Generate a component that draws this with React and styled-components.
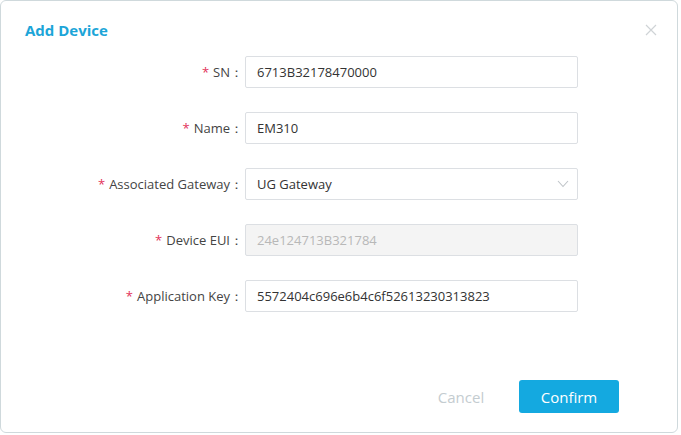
import styled, { createGlobalStyle } from "styled-components";

const GlobalStyle = createGlobalStyle`
    body {
        margin: 0;
        background: #ffffff;
        font-family: "Open Sans", "Noto Sans", sans-serif;
    }
`;

const Dialog = styled.div`
    width: 678px;
    height: 433px;
    box-sizing: border-box;
    border: 1px solid #cfd9dc;
    border-radius: 6px;
    background: #fff;
    display: flex;
    flex-direction: column;
`;
const Header = styled.div`
    display: flex;
    align-items: center;
    justify-content: space-between;
    padding: 19px 20px 0 24px;
    height: 20px;
`;
const Title = styled.div`
    font-size: 15px;
    font-weight: 700;
    color: #1ca5d8;
`;
const Close = styled.div`
    width: 12px;
    height: 12px;
    display: flex;
    cursor: pointer;
`;
const Form = styled.div`
    display: flex;
    flex-direction: column;
    gap: 24px;
    padding-top: 16px;
`;
const Row = styled.div`
    display: flex;
    align-items: center;
    height: 32px;
`;
const Label = styled.label`
    width: 242px;
    text-align: right;
    font-size: 13px;
    color: #444;
    white-space: nowrap;
`;
const Star = styled.span`
    color: #e2325a;
    margin-right: 4px;
`;
const Field = styled.div`
    margin-left: 2px;
    width: 333px;
    height: 32px;
    box-sizing: border-box;
    border: 1px solid #dcdfe3;
    border-radius: 2px;
    background: ${p => (p.disabled ? "#f4f4f4" : "#fff")};
    color: ${p => (p.disabled ? "#b8b8b8" : "#333")};
    font-size: 13px;
    display: flex;
    align-items: center;
    justify-content: space-between;
    padding: 0 8px 0 11px;
`;
const Footer = styled.div`
    margin-top: auto;
    display: flex;
    justify-content: flex-end;
    gap: 8px;
    padding: 0 58px 19px 0;
`;
const Button = styled.button`
    width: 100px;
    height: 33px;
    border: none;
    border-radius: 3px;
    font-family: inherit;
    font-size: 15px;
    cursor: pointer;
    background: ${p => (p.primary ? "#14a9e0" : "transparent")};
    color: ${p => (p.primary ? "#fff" : "#c4ccd0")};
`;

const fields = [
    { label: "SN", value: "6713B32178470000" },
    { label: "Name", value: "EM310" },
    { label: "Associated Gateway", value: "UG Gateway", select: true },
    { label: "Device EUI", value: "24e124713B321784", disabled: true },
    { label: "Application Key", value: "5572404c696e6b4c6f52613230313823" },
];

const App = () => {
    return (
        <>
            <GlobalStyle />
            <Dialog>
                <Header>
                    <Title>Add Device</Title>
                    <Close>
                        <svg width="12" height="12" viewBox="0 0 12 12">
                            <path d="M1 1L11 11M11 1L1 11" stroke="#cfd3d6" strokeWidth="1.2" fill="none" />
                        </svg>
                    </Close>
                </Header>
                <Form>
                    {fields.map(f => (
                        <Row key={f.label}>
                            <Label>
                                <Star>*</Star>
                                {f.label}：
                            </Label>
                            <Field disabled={f.disabled}>
                                <span>{f.value}</span>
                                {f.select && (
                                    <svg width="12" height="8" viewBox="0 0 12 8">
                                        <path d="M1 1L6 6.5L11 1" stroke="#bfc4c8" strokeWidth="1.1" fill="none" />
                                    </svg>
                                )}
                            </Field>
                        </Row>
                    ))}
                </Form>
                <Footer>
                    <Button>Cancel</Button>
                    <Button primary>Confirm</Button>
                </Footer>
            </Dialog>
        </>
    );
};

export default App;
